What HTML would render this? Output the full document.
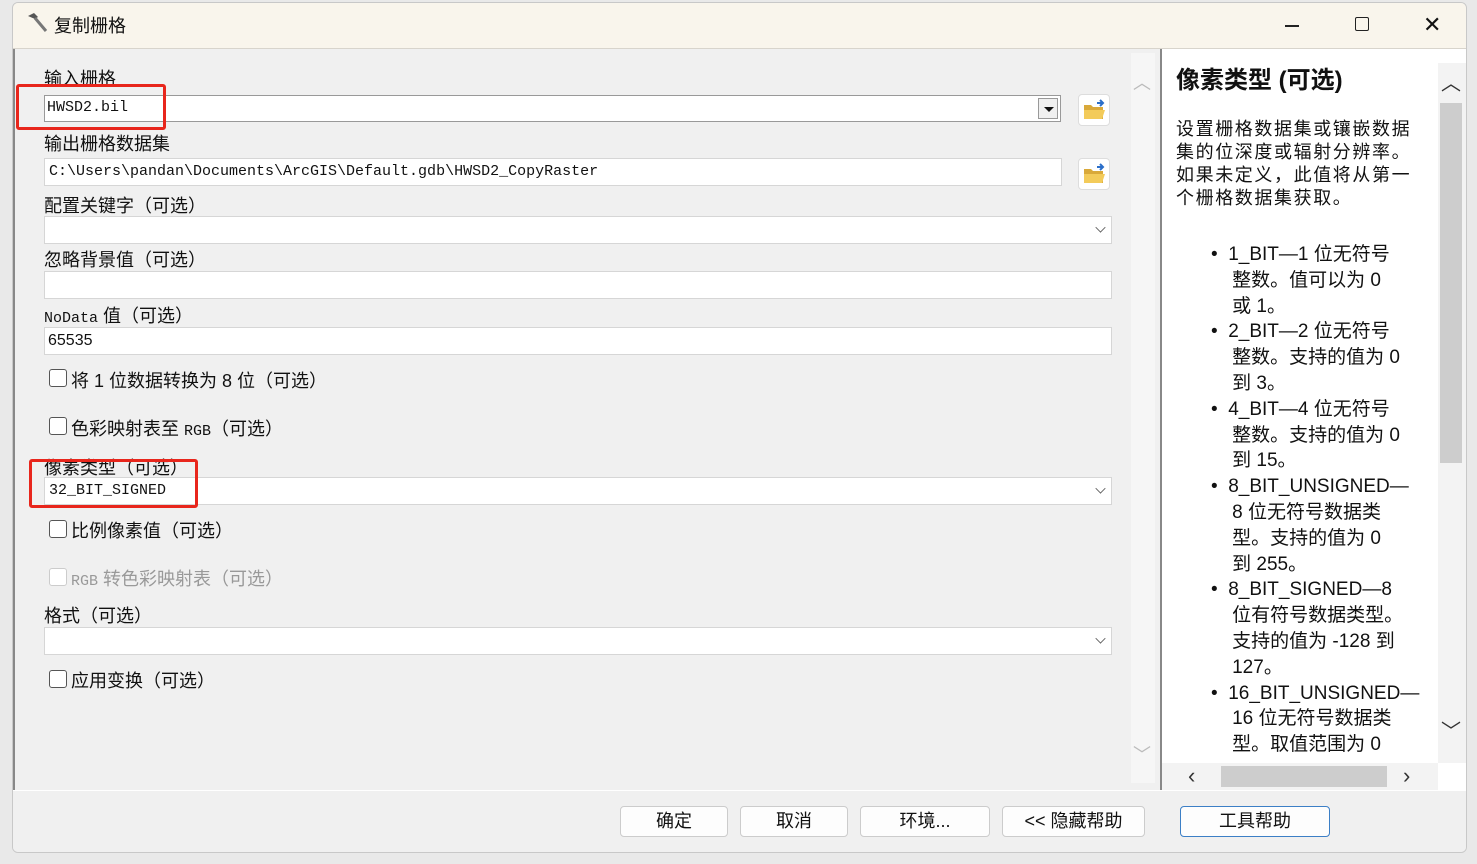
<!DOCTYPE html>
<html><head><meta charset="utf-8"><style>
*{margin:0;padding:0;box-sizing:border-box}
body{width:1477px;height:864px;background:#e9e9e9;font-family:"Liberation Sans","Noto Sans CJK SC",sans-serif;position:relative;overflow:hidden;color:#111}
.a{position:absolute}
.win{left:12px;top:2px;width:1455px;height:851px;background:#f0f0f0;border:1px solid #c8c8c8;border-radius:6px;overflow:hidden}
.title{left:0;top:0;width:100%;height:46px;background:#f9f5ec;border-bottom:1px solid #d8d4cc}
.lbl{font-size:18px;color:#111;white-space:nowrap}
.box{background:#fff;border:1px solid #d6d6d6;height:28px}
.mono{font-family:"Liberation Mono","Noto Sans CJK SC",monospace;font-size:15px}
.chev{position:absolute;right:6px;top:6px;width:9px;height:9px;border-right:1.5px solid #555;border-bottom:1.5px solid #555;transform:rotate(45deg) scale(.8)}
.cb{width:18px;height:18px;border:1.5px solid #555;border-radius:3px;background:#fff}
.btn{height:31px;background:#fdfdfd;border:1px solid #ccc;border-radius:4px;font-size:18px;text-align:center;line-height:29px}
.help{font-size:18px;line-height:23px;color:#111}
.folder{width:32px;height:32px;background:#fff;border:1px solid #ddd;border-radius:4px}
</style></head><body>
<div class="a win">
 <div class="a title">
  <svg class="a" style="left:12px;top:8px" width="24" height="24" viewBox="0 0 24 24"><path d="M3 5 L9 2 L13 6 L10 8 Z" fill="#555"/><path d="M10 7 L21 20" stroke="#777" stroke-width="3"/></svg>
  <div class="a" style="left:41px;top:9px;font-size:18px">复制栅格</div>
  <div class="a" style="left:1272px;top:22px;width:14px;height:1.5px;background:#222"></div>
  <div class="a" style="left:1342px;top:14px;width:14px;height:14px;border:1.5px solid #222;border-radius:2px"></div>
  <div class="a" style="left:1410px;top:9px;font-size:22px;font-weight:300">✕</div>
 </div>
 <div class="a" style="left:0;top:46px;width:1145px;height:741px;background:#f0f0f0;border-left:2px solid #888"></div>
 <div class="a" style="left:1118px;top:50px;width:24px;height:730px;background:#f6f6f6"></div>
 <div class="a" style="left:1120px;top:66px;color:#bbb;font-size:18px">︿</div>
 <div class="a" style="left:1120px;top:738px;color:#bbb;font-size:18px">﹀</div>

 <div class="a lbl" style="left:31px;top:62px">输入栅格</div>
 <div class="a box" style="left:31px;top:92px;width:1017px;height:27px;border-color:#999"><span class="a mono" style="left:2px;top:3px">HWSD2.bil</span>
  <div class="a" style="right:2px;top:2px;width:20px;height:21px;border:1px solid #999;background:#f0f0f0"><div class="a" style="left:5px;top:8px;border-left:5px solid transparent;border-right:5px solid transparent;border-top:5px solid #111"></div></div></div>
 <div class="a" style="left:3px;top:81px;width:150px;height:46px;border:3px solid #e8261c;border-radius:3px"></div>
 <div class="a folder" style="left:1065px;top:91px"><svg width="30" height="30" viewBox="0 0 30 30"><path d="M5 10h7l2 2h10v12H5z" fill="#d9a93a"/><path d="M5 15h21l-3 9H5z" fill="#f3cb5a"/><path d="M18 8h5M21 5l3 3-3 3" stroke="#2a6ec9" stroke-width="2" fill="none"/></svg></div>

 <div class="a lbl" style="left:31px;top:127px">输出栅格数据集</div>
 <div class="a box" style="left:31px;top:155px;width:1018px"><span class="a mono" style="left:4px;top:4px">C:\Users\pandan\Documents\ArcGIS\Default.gdb\HWSD2_CopyRaster</span></div>
 <div class="a folder" style="left:1065px;top:155px"><svg width="30" height="30" viewBox="0 0 30 30"><path d="M5 10h7l2 2h10v12H5z" fill="#d9a93a"/><path d="M5 15h21l-3 9H5z" fill="#f3cb5a"/><path d="M18 8h5M21 5l3 3-3 3" stroke="#2a6ec9" stroke-width="2" fill="none"/></svg></div>

 <div class="a lbl" style="left:31px;top:189px">配置关键字（可选）</div>
 <div class="a box" style="left:31px;top:213px;width:1068px"><div class="chev"></div></div>
 <div class="a lbl" style="left:31px;top:243px">忽略背景值（可选）</div>
 <div class="a box" style="left:31px;top:268px;width:1068px"></div>
 <div class="a lbl" style="left:31px;top:299px"><span class="mono">NoData</span> 值（可选）</div>
 <div class="a box" style="left:31px;top:324px;width:1068px"><span class="a" style="left:3px;top:4px;font-size:16px">65535</span></div>

 <div class="a cb" style="left:36px;top:366px"></div><div class="a lbl" style="left:58px;top:364px">将 1 位数据转换为 8 位（可选）</div>
 <div class="a cb" style="left:36px;top:414px"></div><div class="a lbl" style="left:58px;top:412px">色彩映射表至 <span class="mono">RGB</span>（可选）</div>

 <div class="a lbl" style="left:31px;top:451px">像素类型（可选）</div>
 <div class="a box" style="left:31px;top:474px;width:1068px"><span class="a mono" style="left:4px;top:4px">32_BIT_SIGNED</span><div class="chev"></div></div>
 <div class="a" style="left:16px;top:456px;width:169px;height:49px;border:3px solid #e8261c;border-radius:3px"></div>

 <div class="a cb" style="left:36px;top:517px"></div><div class="a lbl" style="left:58px;top:514px">比例像素值（可选）</div>
 <div class="a cb" style="left:36px;top:565px;border-color:#ccc"></div><div class="a lbl" style="left:58px;top:562px;color:#999"><span class="mono">RGB</span> 转色彩映射表（可选）</div>

 <div class="a lbl" style="left:31px;top:599px">格式（可选）</div>
 <div class="a box" style="left:31px;top:624px;width:1068px"><div class="chev"></div></div>
 <div class="a cb" style="left:36px;top:667px"></div><div class="a lbl" style="left:58px;top:664px">应用变换（可选）</div>

 <div class="a" style="left:1147px;top:46px;width:2px;height:741px;background:#888"></div>
 <div class="a" style="left:1149px;top:46px;width:306px;height:741px;background:#fff"></div>
 <div class="a" style="left:1425px;top:60px;width:28px;height:700px;background:#f3f3f3"></div>
 <div class="a" style="left:1427px;top:100px;width:22px;height:360px;background:#cdcdcd"></div>
 <div class="a" style="left:1428px;top:64px;font-size:20px;color:#333">︿</div>
 <div class="a" style="left:1428px;top:712px;font-size:20px;color:#333">﹀</div>
 <div class="a" style="left:1149px;top:760px;width:276px;height:27px;background:#f3f3f3"></div>
 <div class="a" style="left:1208px;top:763px;width:166px;height:21px;background:#cdcdcd"></div>
 <div class="a" style="left:1175px;top:760px;font-size:22px;color:#333">‹</div>
 <div class="a" style="left:1390px;top:760px;font-size:22px;color:#333">›</div>
 <div class="a" style="left:1163px;top:57px;font-size:24px;font-weight:bold">像素类型 (可选)</div>
 <div class="a help" style="left:1163px;top:115px;width:240px;letter-spacing:1.6px">设置栅格数据集或镶嵌数据集的位深度或辐射分辨率。如果未定义，此值将从第一个栅格数据集获取。</div>
 <div class="a help" style="left:1198px;top:239px;width:228px;line-height:25.8px;font-size:19px">
  <div>•&nbsp;&nbsp;1_BIT—1 位无符号<br>&nbsp;&nbsp;&nbsp;&nbsp;整数。值可以为 0<br>&nbsp;&nbsp;&nbsp;&nbsp;或 1。</div>
  <div>•&nbsp;&nbsp;2_BIT—2 位无符号<br>&nbsp;&nbsp;&nbsp;&nbsp;整数。支持的值为 0<br>&nbsp;&nbsp;&nbsp;&nbsp;到 3。</div>
  <div>•&nbsp;&nbsp;4_BIT—4 位无符号<br>&nbsp;&nbsp;&nbsp;&nbsp;整数。支持的值为 0<br>&nbsp;&nbsp;&nbsp;&nbsp;到 15。</div>
  <div>•&nbsp;&nbsp;8_BIT_UNSIGNED—<br>&nbsp;&nbsp;&nbsp;&nbsp;8 位无符号数据类<br>&nbsp;&nbsp;&nbsp;&nbsp;型。支持的值为 0<br>&nbsp;&nbsp;&nbsp;&nbsp;到 255。</div>
  <div>•&nbsp;&nbsp;8_BIT_SIGNED—8<br>&nbsp;&nbsp;&nbsp;&nbsp;位有符号数据类型。<br>&nbsp;&nbsp;&nbsp;&nbsp;支持的值为 -128 到<br>&nbsp;&nbsp;&nbsp;&nbsp;127。</div>
  <div>•&nbsp;&nbsp;16_BIT_UNSIGNED—<br>&nbsp;&nbsp;&nbsp;&nbsp;16 位无符号数据类<br>&nbsp;&nbsp;&nbsp;&nbsp;型。取值范围为 0</div>
 </div>
 <div class="a" style="left:1149px;top:757px;width:276px;height:3px;background:#fff"></div>

 <div class="a" style="left:0;top:787px;width:100%;height:64px;background:#f0f0f0;border-top:1px solid #fff"></div>
 <div class="a btn" style="left:607px;top:803px;width:108px">确定</div>
 <div class="a btn" style="left:727px;top:803px;width:108px">取消</div>
 <div class="a btn" style="left:847px;top:803px;width:130px">环境...</div>
 <div class="a btn" style="left:989px;top:803px;width:143px">&lt;&lt; 隐藏帮助</div>
 <div class="a btn" style="left:1167px;top:803px;width:150px;border-color:#3c7fc6">工具帮助</div>
</div>
</body></html>
